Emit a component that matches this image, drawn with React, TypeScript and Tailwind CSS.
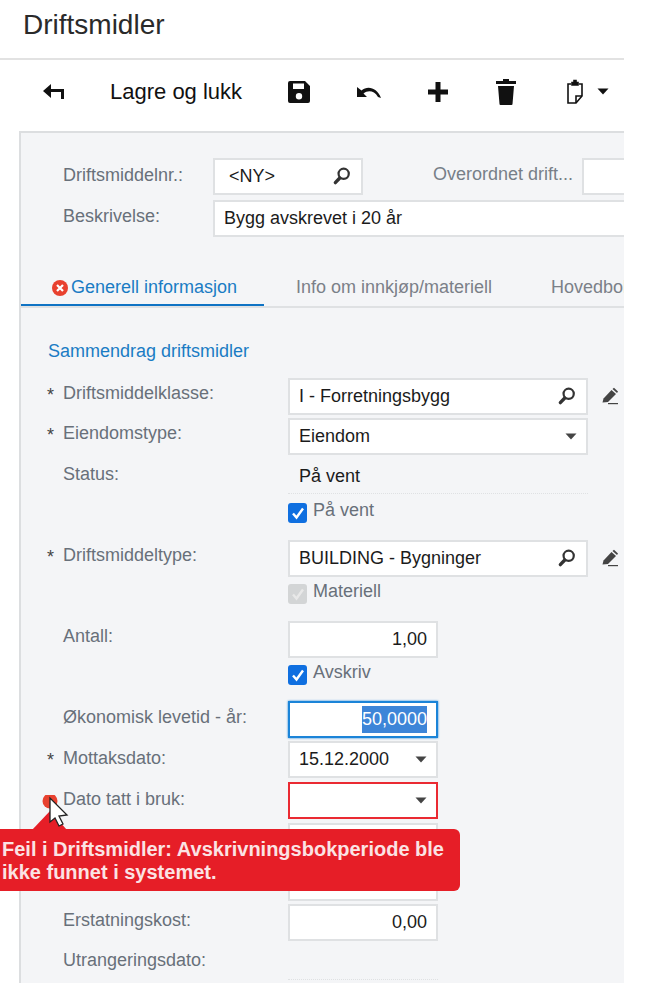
import React from "react";

const font = { fontFamily: '"Liberation Sans", Arial, sans-serif' };

function Search() {
  return (
    <svg width="20" height="20" viewBox="0 0 18 18" fill="none" stroke="#333" strokeWidth="2">
      <circle cx="10.5" cy="7" r="4.6" />
      <path d="M7 10.8 L3 15" strokeWidth="3" strokeLinecap="round" />
    </svg>
  );
}

function Pencil() {
  return (
    <svg width="18" height="18" viewBox="0 0 18 18" fill="#444">
      <path d="M2.5 11.5 L10.5 3 L15 7 L7 15 L1.5 15.5 Z" />
      <path d="M11.5 2 L13 0.8 L17 4.5 L16 6 Z" />
      <rect x="7" y="16" width="10" height="1.2" />
    </svg>
  );
}

function Caret() {
  return (
    <svg width="12" height="7" viewBox="0 0 12 7" fill="#444">
      <path d="M0.5 0.5 H11.5 L6 6.5 Z" />
    </svg>
  );
}

function Check({ disabled }: { disabled?: boolean }) {
  return (
    <span
      className={
        "flex h-[20px] w-[19px] shrink-0 items-center justify-center rounded-[3px] " +
        (disabled ? "bg-[#d3d5d6]" : "bg-[#0f6fe0]")
      }
    >
      <svg width="14" height="14" viewBox="0 0 14 14" fill="none" stroke={disabled ? "#e8e8e8" : "#fff"} strokeWidth="2.4">
        <path d="M2 7.5 L5.5 11.5 L12 2.5" />
      </svg>
    </span>
  );
}

function Row({
  label,
  req,
  labelPad = "pt-[5px]",
  children,
  className = "",
}: {
  label?: string;
  req?: boolean;
  labelPad?: string;
  children: React.ReactNode;
  className?: string;
}) {
  return (
    <div className={"flex items-start " + className}>
      <div className={"flex w-[267px] shrink-0 pl-[42px] text-[18px] leading-[20px] text-[#68707a] " + labelPad}>
        <span className="relative">
          {req && <span className="absolute left-[-16px] top-[2px] text-[#444]">*</span>}
          {label}
        </span>
      </div>
      {children}
    </div>
  );
}

function Box({
  w = "w-[300px]",
  children,
  className = "",
  border = "border-[#dfe1e3]",
  pad = "pb-[1px]",
}: {
  w?: string;
  children?: React.ReactNode;
  className?: string;
  border?: string;
  pad?: string;
}) {
  return (
    <div
      className={
        "flex h-[37px] shrink-0 items-center justify-between border-2 bg-white px-[9px] text-[18px] text-[#1b1b1b] " +
        pad +
        " " +
        border +
        " " +
        w +
        " " +
        className
      }
    >
      {children}
    </div>
  );
}

function CheckRow({ label, disabled, className = "" }: { label: string; disabled?: boolean; className?: string }) {
  return (
    <div className={"flex items-start gap-[6px] pl-[267px] text-[18px] leading-[15px] text-[#68707a] " + className}>
      <Check disabled={disabled} />
      <span>{label}</span>
    </div>
  );
}

export default function App() {
  return (
    <div className="h-[983px] w-[652px] overflow-hidden bg-white" style={font}>
      <div className="relative h-[983px] w-[624px] overflow-hidden">
        <div className="h-[60px] border-b-2 border-[#e2e2e2] pl-[23px] pt-[9px] text-[28px] leading-[32px] text-[#2a2a2a]">
          Driftsmidler
        </div>

        <div className="flex h-[71px] items-center pb-[8px] text-[#111]">
          <svg className="ml-[43px]" width="22" height="16" viewBox="0 0 22 16" fill="#111">
            <path d="M0 7 L8 0 V5 H21 V15 H18 V8 H8 V14 Z" />
          </svg>
          <span className="ml-[45px] text-[22px]">Lagre og lukk</span>
          <svg className="ml-[46px]" width="22" height="22" viewBox="0 0 22 22" fill="#111">
            <path fillRule="evenodd" d="M2 0 H17 L22 5 V20 A2 2 0 0 1 20 22 H2 A2 2 0 0 1 0 20 V2 A2 2 0 0 1 2 0 Z M5 2.5 V8 H16 V2.5 Z M11 12 A3.2 3.2 0 1 0 11 18.4 A3.2 3.2 0 1 0 11 12 Z" />
          </svg>
          <svg className="ml-[47px]" width="24" height="14" viewBox="0 0 24 14" fill="#111">
            <path d="M0 2 L0 12 L10 12 L6.5 8.5 C11 5 17 5.5 21 12 L24 13 C20 3 11 0 4.5 5.5 Z" />
          </svg>
          <svg className="ml-[46px]" width="22" height="22" viewBox="0 0 22 22" fill="#111">
            <path d="M8.5 1 H13.5 V8.5 H21 V13.5 H13.5 V21 H8.5 V13.5 H1 V8.5 H8.5 Z" />
          </svg>
          <svg className="ml-[47px]" width="20" height="26" viewBox="0 0 20 26" fill="#111">
            <path d="M7 0 H13 V2 H20 V5 H0 V2 H7 Z M2 7 H18 L16.5 25 A1 1 0 0 1 15.5 26 H4.5 A1 1 0 0 1 3.5 25 Z" />
          </svg>
          <svg className="ml-[50px]" width="18" height="26" viewBox="0 0 18 26" fill="none" stroke="#111" strokeWidth="1.6">
            <path d="M5 5 H2 V24 H10 L16 17 V5 H13" />
            <path d="M10 24 V17 H16" />
            <path d="M6 6 V3.5 H8 V1.5 H10 V3.5 H12 V6 Z" fill="#111" />
          </svg>
          <svg className="ml-[13px]" width="12" height="7" viewBox="0 0 12 7" fill="#111">
            <path d="M0.5 0.5 H11.5 L6 6.5 Z" />
          </svg>
        </div>

        <div className="ml-[19px] h-[860px] border-l-2 border-t-2 border-[#dcdee0] bg-[#f4f5f7]">
          <div className="flex items-start pt-[25px]">
            <div className="w-[42px] shrink-0" />
            <div className="w-[150px] shrink-0 pt-[7px] text-[18px] leading-[20px] text-[#68707a]">Driftsmiddelnr.:</div>
            <Box w="w-[150px]" className="pl-[14px]">
              <span>&lt;NY&gt;</span>
              <Search />
            </Box>
            <div className="ml-[70px] w-[149px] shrink-0 whitespace-nowrap pt-[6px] text-[18px] leading-[20px] text-[#777f88]">Overordnet drift...</div>
            <Box w="w-[60px]" />
          </div>
          <div className="mt-[5px] flex items-start">
            <div className="w-[42px] shrink-0" />
            <div className="w-[150px] shrink-0 pt-[6px] text-[18px] leading-[20px] text-[#68707a]">Beskrivelse:</div>
            <Box w="w-[420px]">Bygg avskrevet i 20 år</Box>
          </div>

          <div className="mt-[28px] flex h-[43px] overflow-hidden border-b-2 border-[#dfe1e3] text-[18px]">
            <div className="flex h-[43px] w-[243px] shrink-0 items-center gap-[3px] border-b-[4px] border-[#0f73c4] pl-[31px] pt-[6px] text-[#1a7cc4]">
              <svg width="16" height="16" viewBox="0 0 16 16">
                <circle cx="8" cy="8" r="8" fill="#e8412f" />
                <path d="M5 5 L11 11 M11 5 L5 11" stroke="#fff" strokeWidth="2.2" />
              </svg>
              <span>Generell informasjon</span>
            </div>
            <div className="flex w-[287px] shrink-0 items-center whitespace-nowrap pl-[32px] pt-[3px] text-[#7b8088]">Info om innkjøp/materiell</div>
            <div className="flex items-center pt-[3px] text-[#7b8088]">Hovedbok</div>
          </div>

          <div className="pl-[27px] pt-[33px] text-[18px] leading-[20px] text-[#1a7cc4]">Sammendrag driftsmidler</div>

          <Row label="Driftsmiddelklasse:" req className="mt-[17px]">
            <Box>
              <span>I - Forretningsbygg</span>
              <Search />
            </Box>
            <span className="ml-[13px] mt-[9px]"><Pencil /></span>
          </Row>
          <Row label="Eiendomstype:" req className="mt-[3px]">
            <Box>
              <span>Eiendom</span>
              <Caret />
            </Box>
          </Row>
          <Row label="Status:" labelPad="pt-0" className="mt-[9px]">
            <div className="h-[30px] w-[300px] border-b border-dotted border-[#dfe1e3] pl-[11px] pt-[1px] text-[18px] leading-[22px] text-[#1b1b1b]">På vent</div>
          </Row>
          <CheckRow label="På vent" className="mt-[9px]" />
          <Row label="Driftsmiddeltype:" req className="mt-[17px]">
            <Box>
              <span>BUILDING - Bygninger</span>
              <Search />
            </Box>
            <span className="ml-[13px] mt-[9px]"><Pencil /></span>
          </Row>
          <CheckRow label="Materiell" disabled className="mt-[7px]" />
          <Row label="Antall:" className="mt-[17px]">
            <Box w="w-[150px]" className="justify-end"><span>1,00</span></Box>
          </Row>
          <CheckRow label="Avskriv" className="mt-[7px]" />
          <Row label="Økonomisk levetid - år:" labelPad="pt-[6px]" className="mt-[16px]">
            <Box w="w-[150px]" className="justify-end shadow-[0_0_2px_#1b84d8]" border="border-[#1b84d8]" pad="pb-0">
              <span className="bg-[#3d85d8] text-white">50,0000</span>
            </Box>
          </Row>
          <Row label="Mottaksdato:" req labelPad="pt-[7px]" className="mt-[3px]">
            <Box w="w-[150px]" pad="pb-0">
              <span>15.12.2000</span>
              <Caret />
            </Box>
          </Row>
          <Row label="Dato tatt i bruk:" labelPad="pt-[7px]" className="mt-[4px]">
            <Box w="w-[150px]" className="justify-end" border="border-[#ea2a32]" pad="pb-0">
              <Caret />
            </Box>
          </Row>
          <Row className="mt-[4px]">
            <Box w="w-[150px]" />
          </Row>
          <Row className="mt-[4px]">
            <Box w="w-[150px]" />
          </Row>
          <Row label="Erstatningskost:" labelPad="pt-[6px]" className="mt-[3px]">
            <Box w="w-[150px]" className="justify-end"><span>0,00</span></Box>
          </Row>
          <Row label="Utrangeringsdato:" labelPad="pt-0" className="mt-[9px]">
            <div className="h-[30px] w-[150px] border-b border-dotted border-[#dfe1e3]" />
          </Row>
        </div>

        <div className="absolute left-0 top-[829px] h-[62px] w-[460px] rounded-r-[6px] bg-[#e61e27] pl-[2px] pt-[9px] text-[20px] font-bold leading-[23px] whitespace-nowrap text-[#fbe3e4]">
          Feil i Driftsmidler: Avskrivningsbokperiode ble
          <br />
          ikke funnet i systemet.
        </div>
        <svg className="absolute left-[30px] top-[795px]" width="40" height="36" viewBox="0 0 40 36" fill="none">
          <path d="M2 35 L20 16 L37 35 Z" fill="#e61e27" />
          <circle cx="20" cy="6" r="7.5" fill="#e8412f" />
          <path d="M20 3 V27 L25 23 L29 31 L33 29 L29 21 L37 20 Z" fill="#fff" stroke="#222" strokeWidth="1.3" />
        </svg>
      </div>
    </div>
  );
}
